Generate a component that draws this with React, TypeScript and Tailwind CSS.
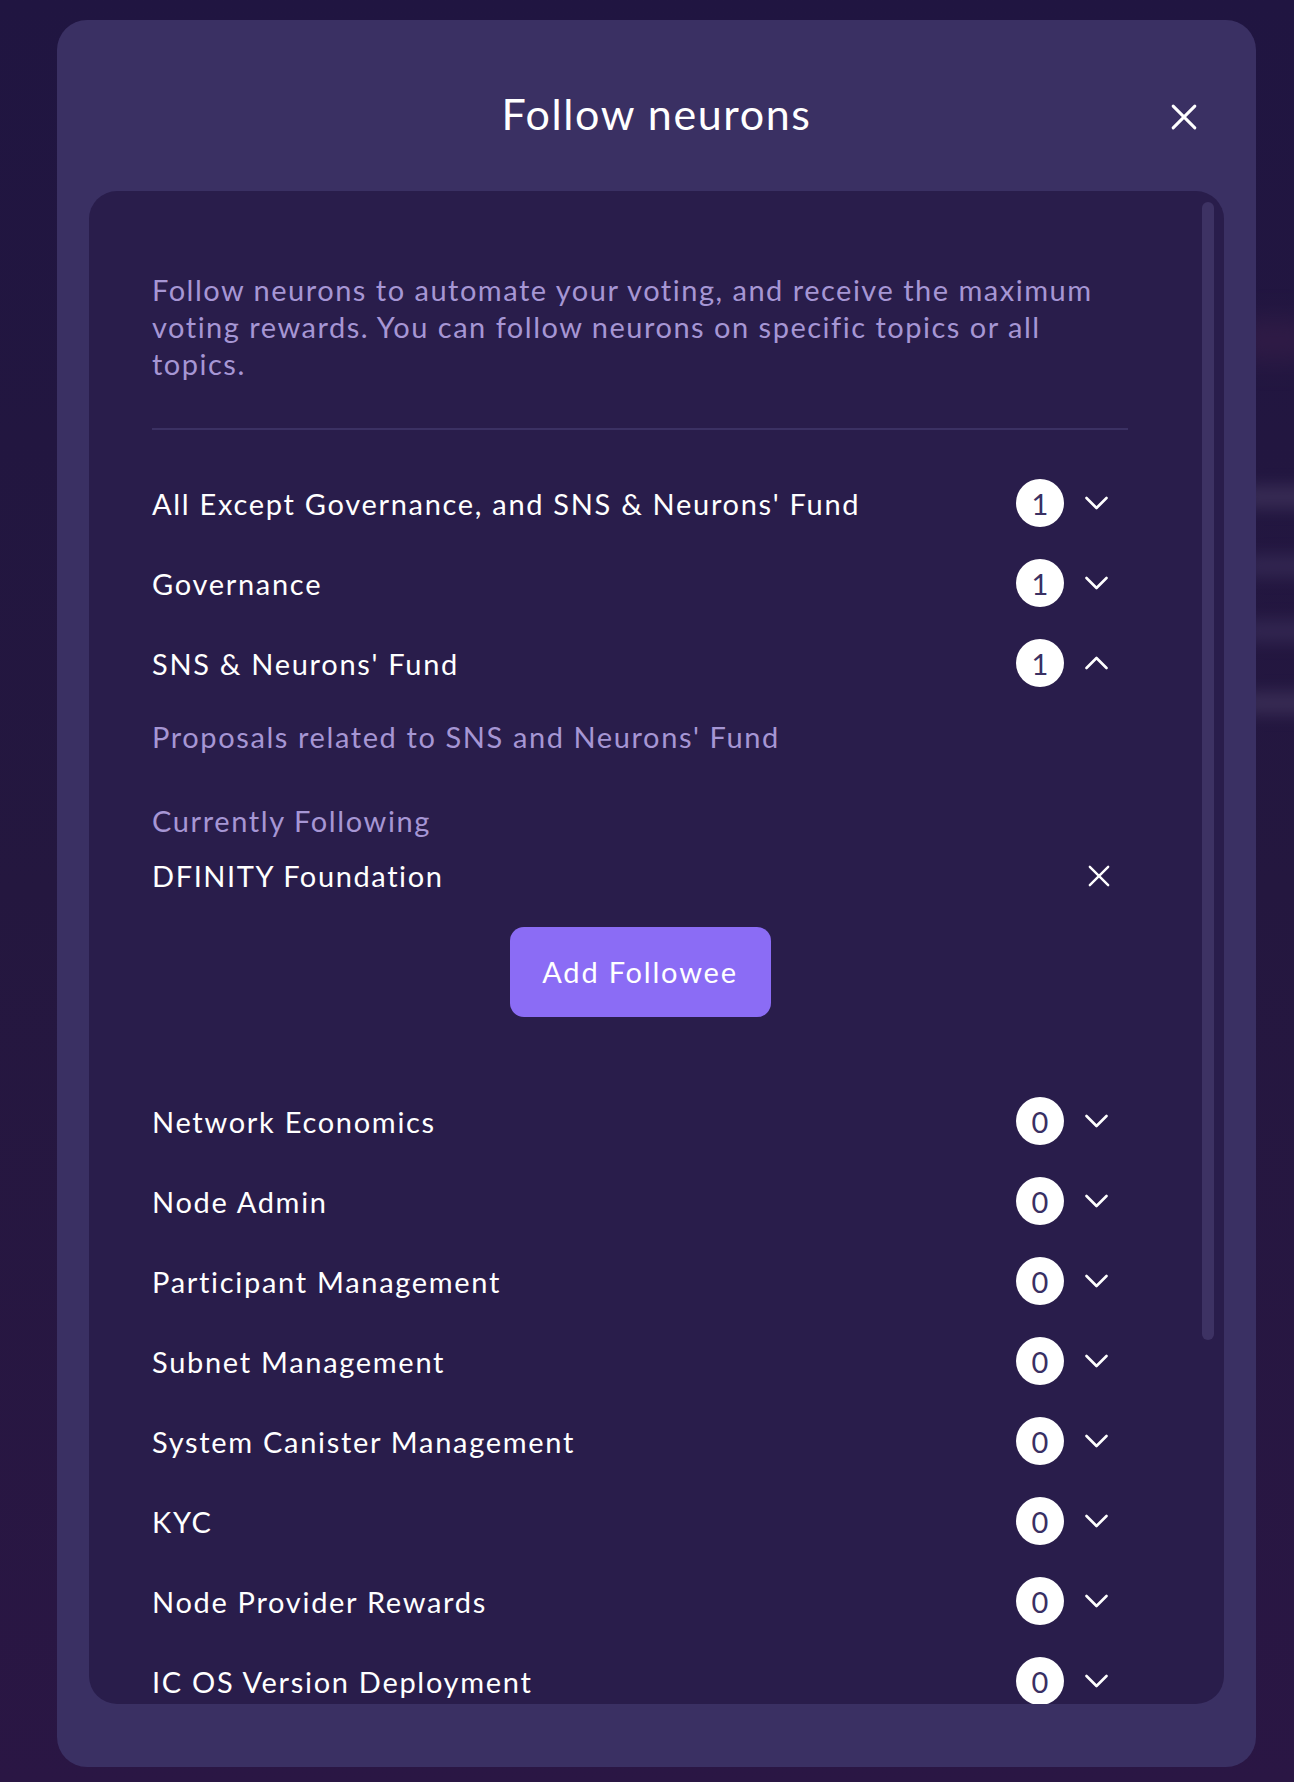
import React from "react";

const font = { fontFamily: "Lato, 'Open Sans', sans-serif" };

function Chevron({ up = false }: { up?: boolean }) {
  return (
    <svg width="23" height="14" viewBox="0 0 23 14" fill="none" className="shrink-0">
      <path
        d={up ? "M1.5 12 L11.5 2 L21.5 12" : "M1.5 2 L11.5 12 L21.5 2"}
        stroke="white"
        strokeWidth="2.6"
        strokeLinecap="round"
        strokeLinejoin="round"
      />
    </svg>
  );
}

function XIcon({ size, stroke }: { size: number; stroke: number }) {
  return (
    <svg width={size} height={size} viewBox="0 0 24 24" fill="none" className="shrink-0">
      <path d="M2 2 L22 22 M22 2 L2 22" stroke="white" strokeWidth={stroke} strokeLinecap="round" />
    </svg>
  );
}

function Row({ label, count, open = false }: { label: string; count: number; open?: boolean }) {
  return (
    <div className="flex h-[80px] items-center">
      <span className="flex-1 text-[29px] leading-[37px] text-white tracking-[1.7px]">{label}</span>
      <div className="flex h-[48px] w-[48px] items-center justify-center rounded-full bg-white text-[29px] leading-none text-[#3a3063]">
        {count}
      </div>
      <div className="ml-[21px] mr-[20px] flex items-center">
        <Chevron up={open} />
      </div>
    </div>
  );
}

const rest = [
  "Network Economics",
  "Node Admin",
  "Participant Management",
  "Subnet Management",
  "System Canister Management",
  "KYC",
  "Node Provider Rewards",
  "IC OS Version Deployment",
];

export default function App() {
  return (
    <div
      className="relative h-[1782px] w-full overflow-hidden bg-gradient-to-b from-[#201541] via-[#24173f] to-[#2a1644]"
      style={font}
    >
      {/* blurred background content */}
      <div className="pointer-events-none absolute left-[1230px] top-[320px] h-[40px] w-[90px] rounded-full bg-[#3a1f4a] opacity-60 blur-[14px]" />
      <div className="pointer-events-none absolute left-[1240px] top-[486px] h-[22px] w-[80px] rounded-full bg-[#463a62] opacity-60 blur-[8px]" />
      <div className="pointer-events-none absolute left-[1240px] top-[555px] h-[22px] w-[80px] rounded-full bg-[#3c305c] opacity-60 blur-[8px]" />
      <div className="pointer-events-none absolute left-[1240px] top-[620px] h-[22px] w-[80px] rounded-full bg-[#3c305c] opacity-60 blur-[8px]" />
      <div className="pointer-events-none absolute left-[1240px] top-[692px] h-[22px] w-[80px] rounded-full bg-[#463a62] opacity-60 blur-[8px]" />

      <div className="relative ml-[57px] pt-[20px]">
        <div className="relative flex h-[1747px] w-[1199px] flex-col rounded-[30px] bg-[#3a3063]">
          {/* header */}
          <div className="relative flex h-[171px] shrink-0 items-start justify-center pt-[69px]">
            <h1 className="text-[43px] leading-[50px] font-normal text-white tracking-[1.6px]">Follow neurons</h1>
            <button className="absolute left-[1114px] top-[84px]">
              <XIcon size={26} stroke={2.8} />
            </button>
          </div>

          {/* card */}
          <div className="relative ml-[32px] h-[1513px] w-[1135px] overflow-hidden rounded-[28px] bg-[#291d4b]">
            <div className="pl-[63px] pr-[96px] pt-[80px]">
              <p className="whitespace-nowrap text-[29px] leading-[37px] text-[#a696d4] tracking-[1.5px]">
                Follow neurons to automate your voting, and receive the maximum
                <br />
                voting rewards. You can follow neurons on specific topics or all
                <br />
                topics.
              </p>
              <div className="mt-[46px] h-[2px] w-full bg-[#3b3163]" />
              <div className="mt-[33px]">
                <Row label="All Except Governance, and SNS & Neurons' Fund" count={1} />
                <Row label="Governance" count={1} />
                <Row label="SNS & Neurons' Fund" count={1} open />
                <p className="mt-[15px] text-[29px] leading-[37px] text-[#a696d4] tracking-[1.6px]">
                  Proposals related to SNS and Neurons' Fund
                </p>
                <p className="mt-[47px] text-[29px] leading-[37px] text-[#a696d4] tracking-[1.6px]">
                  Currently Following
                </p>
                <div className="mt-[18px] flex items-center">
                  <span className="flex-1 text-[29px] leading-[37px] text-white tracking-[1.6px]">
                    DFINITY Foundation
                  </span>
                  <div className="mr-[18px]">
                    <XIcon size={22} stroke={2.6} />
                  </div>
                </div>
                <div className="mt-[33px] flex justify-center">
                  <button className="flex h-[90px] w-[261px] items-center justify-center rounded-[14px] bg-[#8b6cf5] text-[29px] text-white tracking-[1.8px]">
                    Add Followee
                  </button>
                </div>
                <div className="mt-[64px]">
                  {rest.map((t) => (
                    <Row key={t} label={t} count={0} />
                  ))}
                </div>
              </div>
            </div>
            {/* scrollbar thumb */}
            <div className="absolute left-[1113px] top-[11px] h-[1138px] w-[12px] rounded-full bg-[#3d3263]" />
          </div>
        </div>
      </div>
    </div>
  );
}
